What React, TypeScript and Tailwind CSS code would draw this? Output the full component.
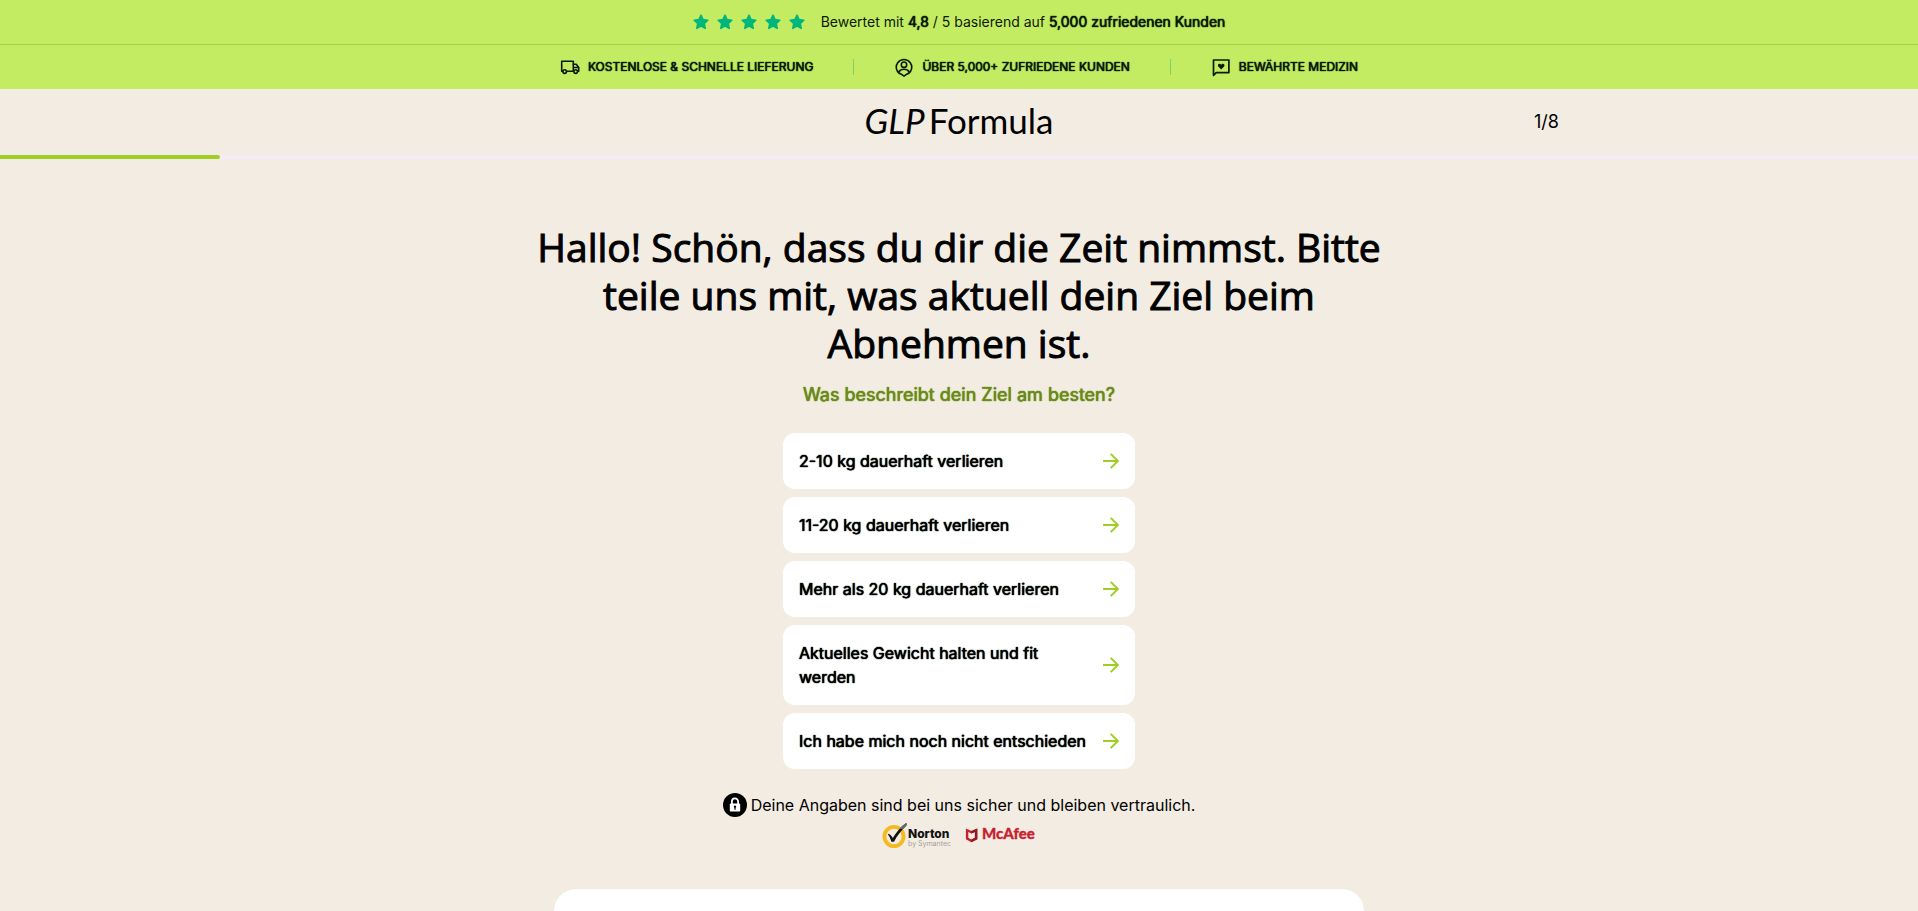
import type { ReactNode } from "react";

const goals = [
  "2-10 kg dauerhaft verlieren",
  "11-20 kg dauerhaft verlieren",
  "Mehr als 20 kg dauerhaft verlieren",
  "Aktuelles Gewicht halten und fit werden",
  "Ich habe mich noch nicht entschieden",
];

const progress = 11.45;

function Star() {
  return (
    <svg viewBox="0 0 24 24" className="size-4" fill="#00b67a" stroke="#00b67a" strokeWidth="2.400" strokeLinejoin="round" aria-hidden="true">
      <path d="M12 1.800l3.100 6.600 7.100.9-5.200 5 1.300 7.200L12 18l-6.300 3.500 1.300-7.200-5.200-5 7.100-.9z" />
    </svg>
  );
}

function TruckIcon() {
  return (
    <svg viewBox="0 0 20 20" className="size-5" fill="none" stroke="currentColor" strokeWidth="1.6" strokeLinejoin="round" strokeLinecap="round" aria-hidden="true">
      <path d="M2.600 14.200H1.700V4.300h11.600v9.900H6.700" />
      <path d="M13.300 7.300h2.900l2.500 3.200v3.700h-1" />
      <path d="M14.500 10.500h4" />
      <circle cx="4.700" cy="14.600" r="1.800" />
      <circle cx="15.700" cy="14.600" r="1.800" />
    </svg>
  );
}

function PersonIcon() {
  return (
    <svg viewBox="0 0 20 20" className="size-5" fill="none" stroke="currentColor" strokeWidth="1.6" strokeLinejoin="round" aria-hidden="true">
      <path d="M7.900 17.600a7.700 7.700 0 1 1 4.200 0L10 19.200z" />
      <circle cx="10" cy="7.700" r="2.700" />
      <path d="M4.800 15.200c1-1.900 2.900-2.900 5.200-2.900s4.200 1 5.200 2.900" />
    </svg>
  );
}

function MessageIcon() {
  return (
    <svg viewBox="0 0 20 20" className="size-5" fill="none" stroke="currentColor" strokeWidth="1.7" strokeLinejoin="round" aria-hidden="true">
      <path d="M2.500 3h15.400v12.600H5.200l-2.700 2.700z" />
      <path d="M10.200 12.400L7.300 9.400c-1.300-1.600.9-3.500 2.400-2.100l.5.500.5-.5c1.500-1.400 3.700.5 2.400 2.100z" fill="currentColor" stroke="none" />
    </svg>
  );
}

function ArrowIcon() {
  return (
    <svg viewBox="0 0 16 16" className="size-4 shrink-0" fill="none" stroke="#9fcf24" strokeWidth="2" aria-hidden="true">
      <path d="M0 8h14.600" />
      <path d="M7.700 .9L14.800 8l-7.100 7.100" />
    </svg>
  );
}

function Benefit({ icon, children }: { icon: ReactNode; children: ReactNode }) {
  return (
    <li className="flex items-center gap-2">
      {icon}
      <span className="text-xs uppercase [text-shadow:0_0_1px_currentColor,0_0_1px_currentColor]">{children}</span>
    </li>
  );
}

function Divider() {
  return <li aria-hidden="true" className="h-4 w-px bg-[#84cf6a]" />;
}

function LockBadge() {
  return (
    <svg viewBox="0 0 24 24" className="size-6" aria-hidden="true">
      <circle cx="12" cy="12" r="12" fill="#000" />
      <path d="M8.900 11V8.500a3.100 3.100 0 0 1 6.200 0V11" fill="none" stroke="#fff" strokeWidth="1.800" />
      <rect x="6.800" y="10.400" width="10.400" height="8.200" rx="1.200" fill="#fff" />
      <path d="M12 12.600a1.200 1.200 0 0 1 .6 2.200v2h-1.200v-2a1.200 1.200 0 0 1 .6-2.200z" fill="#000" />
    </svg>
  );
}

function NortonLogo() {
  return (
    <svg viewBox="0 0 70 28" className="h-7 w-[70px]" role="img" aria-label="Norton by Symantec">
      <circle cx="12" cy="15.500" r="9.600" fill="#f3ecdf" stroke="#f5b921" strokeWidth="3.800" />
      <path d="M6.500 12.800c2 1 3.300 2.500 4.300 4.300C14 11.500 18.500 6 24.200 2c.6 1 .6 1.800 0 2.800C19.500 9.200 15 14.800 12 20.800h-2.600c-.9-3-1.900-5.500-3.500-7.300z" fill="#111" />
      <path d="M17.500 7.600C19.500 5.300 21.700 3.500 24.200 2c.6 1 .6 1.800 0 2.800l-3.400 3.500z" fill="#6d6a66" />
      <text x="26" y="17" fill="#111" fontFamily="Inter, sans-serif" fontWeight="800" fontSize="12">Norton</text>
      <text x="26" y="25" fill="#a5a09a" fontFamily="Inter, sans-serif" fontSize="7">by Symantec</text>
    </svg>
  );
}

function McAfeeLogo() {
  return (
    <svg viewBox="0 0 72 28" className="h-7 w-[72px]" role="img" aria-label="McAfee">
      <path d="M1.900 7.500l5.500 2.500 5.900-2.500v10.800l-5.900 2.900-5.500-2.900z M4.300 11v5.700l3.100 1.700 3.500-1.700V11l-3.500 1.600z" fill="#c8202f" fillRule="evenodd" />
      <path d="M7.400 10l5.900-2.500v10.800l-5.900 2.900v-2.800l3.500-1.700V11l-3.500 1.600z" fill="#8d1a25" />
      <text x="18" y="18" fill="#c8202f" stroke="#c8202f" strokeWidth=".3" fontFamily="Lato, sans-serif" fontWeight="900" fontSize="15">McAfee</text>
    </svg>
  );
}

export default function App() {
  return (
    <div className="flex min-h-screen flex-col bg-[#f3ece2] font-['Inter',sans-serif] text-black">
      <div className="bg-[#c4ec62] text-[#0c1a08]">
        <div className="flex h-[45px] items-center justify-center gap-4 border-b border-[#a5cf48]">
          <div className="flex gap-2" role="img" aria-label="5 Sterne">
            <Star />
            <Star />
            <Star />
            <Star />
            <Star />
          </div>
          <p className="text-sm">
            Bewertet mit <strong className="font-normal [text-shadow:0_0_1px_currentColor,0_0_1px_currentColor]">4,8</strong> / 5 basierend auf{" "}
            <strong className="font-normal [text-shadow:0_0_1px_currentColor,0_0_1px_currentColor]">5,000 zufriedenen Kunden</strong>
          </p>
        </div>
        <ul className="flex h-11 items-center justify-center gap-10">
          <Benefit icon={<TruckIcon />}>Kostenlose &amp; schnelle Lieferung</Benefit>
          <Divider />
          <Benefit icon={<PersonIcon />}>Über 5,000+ zufriedene Kunden</Benefit>
          <Divider />
          <Benefit icon={<MessageIcon />}>Bewährte Medizin</Benefit>
        </ul>
      </div>

      <header>
        <div className="mx-auto grid h-[66px] w-full max-w-[1200px] grid-cols-3 items-center">
          <a href="#" className="col-start-2 flex gap-1 justify-self-center pb-1 font-['Lato',sans-serif] text-[35px] leading-10">
            <span className="italic">GLP</span>
            <span>Formula</span>
          </a>
          <span className="justify-self-end text-lg">1/8</span>
        </div>
        <div className="h-1 bg-[#f6ecf6]" role="progressbar" aria-label="Fortschritt" aria-valuemin={0} aria-valuemax={8} aria-valuenow={1}>
          <div className="h-full rounded-r-full bg-[#9fcf24]" style={{ width: `${progress}%` }} />
        </div>
      </header>

      <main className="flex flex-1 flex-col items-center px-4 pt-16">
        <h1 className="max-w-[880px] text-center font-['Open_Sans',sans-serif] text-[39px] leading-[48px] font-normal [-webkit-text-stroke:1px_currentColor]">
          Hallo! Schön, dass du dir die Zeit nimmst. Bitte teile uns mit, was aktuell dein Ziel beim Abnehmen ist.
        </h1>
        <h2 className="mt-4 text-lg leading-6 text-[#6a8a1a] [text-shadow:0_0_1px_currentColor,0_0_1px_currentColor]">Was beschreibt dein Ziel am besten?</h2>

        <ul className="mt-[26px] flex w-full max-w-[352px] flex-col gap-2">
          {goals.map((goal) => (
            <li key={goal}>
              <button type="button" className="flex w-full items-center justify-between gap-3 rounded-xl bg-white p-4 text-left">
                <span className="text-base [text-shadow:0_0_1px_currentColor,0_0_1px_currentColor]">{goal}</span>
                <ArrowIcon />
              </button>
            </li>
          ))}
        </ul>

        <p className="mt-6 flex items-center gap-1 text-base">
          <LockBadge />
          Deine Angaben sind bei uns sicher und bleiben vertraulich.
        </p>
        <div className="mt-1 flex items-center gap-3">
          <NortonLogo />
          <McAfeeLogo />
        </div>

        <section className="mt-10 w-full max-w-[810px] flex-1 rounded-t-3xl bg-white" />
      </main>
    </div>
  );
}
